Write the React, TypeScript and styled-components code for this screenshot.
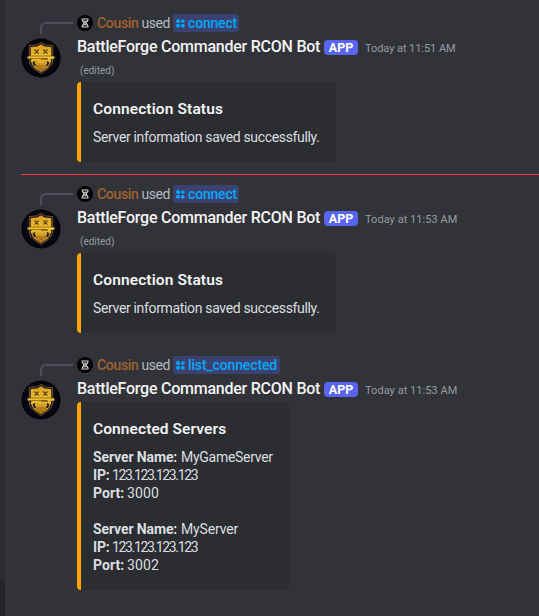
import React from 'react';
import styled, { createGlobalStyle } from 'styled-components';

const GlobalStyle = createGlobalStyle`
  * { box-sizing: border-box; }
  body { margin: 0; background: #313338; overflow: hidden; }
`;

const Screen = styled.div`
  display: flex;
  width: 539px;
  height: 616px;
  background: #323338;
  color: #dbdee1;
  font: 400 14px/18px Roboto, "Noto Sans", sans-serif;
  white-space: nowrap;
`;

const Sidebar = styled.aside`
  display: flex;
  flex: 0 0 5px;
  flex-direction: column;
  justify-content: flex-end;
  background: #2b2d31;
`;

const UserPanel = styled.div`
  height: 37px;
  background: #232428;
`;

const Chat = styled.main`
  flex: 1;
  min-width: 0;
  padding: 14px 0 0 16px;
`;

const Message = styled.article<{ $gap: number }>`
  display: grid;
  grid-template-columns: 40px 1fr;
  column-gap: 16px;
  margin-bottom: ${(p) => p.$gap}px;
`;

const AvatarColumn = styled.div`
  display: flex;
  flex-direction: column;
`;

const ReplySpine = styled.div`
  width: 33px;
  height: 12px;
  margin: 8px 0 4px 19px;
  border: solid #4e5058;
  border-width: 2px 0 0 2px;
  border-top-left-radius: 6px;
`;

const Avatar = styled.svg`
  display: block;
  width: 40px;
  height: 40px;
`;

const Body = styled.div`
  min-width: 0;
`;

const Text = styled.span<{ $track?: number }>`
  letter-spacing: ${(p) => p.$track ?? 0}px;
`;

const ReplyRow = styled.div`
  display: flex;
  align-items: center;
  height: 18px;
  color: #b5bac1;
`;

const MiniAvatar = styled.svg`
  width: 16px;
  height: 16px;
  margin-right: 4px;
`;

const UserName = styled(Text)`
  width: 44.5px;
  color: #a0622f;
  font-weight: 500;
`;

const Used = styled(Text)`
  width: 31.5px;
`;

const Command = styled.span<{ $width: number }>`
  display: flex;
  align-items: center;
  gap: 3px;
  width: ${(p) => p.$width}px;
  height: 18px;
  padding-left: 3px;
  border-radius: 3px;
  background: #3c4270;
  color: #00a8fc;
  font-weight: 500;
`;

const CommandIcon = styled.svg`
  flex: none;
  width: 9px;
  height: 9px;
`;

const Header = styled.header`
  display: flex;
  align-items: center;
  height: 22px;
  margin-top: 4px;
`;

const BotName = styled(Text)`
  width: 247px;
  color: #f2f3f5;
  font-size: 16px;
  font-weight: 500;
`;

const AppBadge = styled.span`
  display: flex;
  align-items: center;
  justify-content: center;
  width: 34px;
  height: 15px;
  margin: 1px 7px 0 0;
  border-radius: 4px;
  background: #5865f2;
  color: #fff;
  font-size: 12.5px;
  font-weight: 700;
  line-height: 15px;
`;

const Timestamp = styled(Text)`
  padding-top: 3px;
  color: #949ba4;
  font-size: 11px;
  font-weight: 400;
`;

const Edited = styled(Text)`
  display: block;
  height: 24px;
  padding-left: 3px;
  color: #949ba4;
  font-size: 10px;
  line-height: 26px;
`;

const Embed = styled.section<{ $width: number; $offset?: number }>`
  width: ${(p) => p.$width}px;
  margin-top: ${(p) => p.$offset ?? 0}px;
  padding: 16px 12px;
  border-left: 4px solid #ffa500;
  border-radius: 4px;
  background: #2b2d31;
`;

const EmbedTitle = styled.h2<{ $track: number }>`
  margin: 0 0 10px;
  color: #f2f3f5;
  font-size: 15.5px;
  font-weight: 600;
  line-height: 23px;
  height: 20px;
  letter-spacing: ${(p) => p.$track}px;
`;

const Line = styled.div`
  display: flex;
  height: 18px;
  line-height: 19px;
`;

const Label = styled(Text)<{ $width: number }>`
  width: ${(p) => p.$width}px;
  font-weight: 700;
`;

const ServerBlock = styled.div`
  & + & { margin-top: 18px; }
`;

const Unread = styled.div`
  height: 1px;
  margin: 12px 0 10px;
  background: #f23f43;
`;

function ShieldAvatar() {
  return (
    <Avatar viewBox="0 0 40 40">
      <defs>
        <radialGradient id="night">
          <stop offset="0" stopColor="#151448" />
          <stop offset=".65" stopColor="#08091f" />
          <stop offset="1" stopColor="#020205" />
        </radialGradient>
        <linearGradient id="gold" x2="0" y2="1">
          <stop offset="0" stopColor="#d99c22" />
          <stop offset=".5" stopColor="#efc431" />
          <stop offset="1" stopColor="#a86c17" />
        </linearGradient>
      </defs>
      <circle cx="20" cy="20" r="19.6" fill="url(#night)" />
      <path d="M8.300 7.500 15.500 7 20 4.500 24.500 7l7.200.5V22c0 6-5 9-11.700 13.500C13.300 31 8.300 28 8.300 22Z" fill="#11101f" stroke="#8f6725" strokeWidth=".8" />
      <path d="M9.700 9 16.300 8.600 20 6.200 23.700 8.600l6.600.4V18.200l3.200.2v2L29.500 21l1 1.800-2.200 4.700-2.300 3L20 34.300 14 30.500l-2.300-3-2.200-4.700 1-1.800-4-.6v-2l3.200-.2Z" fill="url(#gold)" />
      <path d="m13.500 11.500 4.200 4.200m0-4.200-4.200 4.200m8.800-4.200 4.200 4.200m0-4.200-4.200 4.200" stroke="#5c4012" strokeWidth="1.100" />
      <path d="M9.700 18h20.600M6.500 20.500h20" stroke="#7d5517" strokeWidth=".7" />
      <path d="M20 20.700h7v.8h-7Z" fill="#4a3212" />
      <path d="m11.500 24.500 2.700-1.700-.3 2.800 1.600 2-2.500.4Zm17 0-2.700-1.700.3 2.800-1.600 2 2.500.4Z" fill="#2b2020" />
      <path d="M14.500 30.500 16.500 28h7l2 2.500M16.500 31.800 20 30l3.500 1.800" fill="none" stroke="#80591a" strokeWidth=".8" />
      <path d="m16 23.500 1.500 2.500h5l1.500-2.500" fill="none" stroke="#c79422" strokeWidth=".8" />
    </Avatar>
  );
}

function CousinAvatar() {
  return (
    <MiniAvatar viewBox="0 0 16 16">
      <circle cx="8" cy="8" r="8" fill="#020203" />
      <g fill="none" stroke="#d8d8d8">
        <path d="M4.500 4H11.500M4.500 12H11.500" strokeWidth="1.100" />
        <path d="M5 4.500 7 8l-2 3.500M11.300 4.500 9 8l2.300 3.500" strokeWidth="1.300" />
        <path d="M6.500 6.300h3M6.500 9.700h3M8 5.500v5" strokeWidth=".8" />
      </g>
    </MiniAvatar>
  );
}

function SlashCommand({ name, width, track }: { name: string; width: number; track: number }) {
  return (
    <Command $width={width}>
      <CommandIcon viewBox="0 0 9 9" fill="#00a8fc">
        <path d="M0 2a1.900 1.900 0 0 1 1.900-1.900A1.900 1.900 0 0 1 3.900 2v1.900H2A1.900 1.900 0 0 1 0 2Z" />
        <rect x="5" y=".5" width="3.600" height="3.200" rx="1.400" />
        <rect x=".2" y="5" width="3.600" height="3.600" rx="1.400" />
        <rect x="5" y="5" width="3.600" height="3.600" rx="1.400" />
      </CommandIcon>
      <Text $track={track}>{name}</Text>
    </Command>
  );
}

interface BotMessageProps {
  command: React.ReactNode;
  time: string;
  timeTrack: number;
  edited?: boolean;
  gap?: number;
  children: React.ReactNode;
}

function BotMessage({ command, time, timeTrack, edited, gap = 0, children }: BotMessageProps) {
  return (
    <Message $gap={gap}>
      <AvatarColumn>
        <ReplySpine />
        <ShieldAvatar />
      </AvatarColumn>
      <Body>
        <ReplyRow>
          <CousinAvatar />
          <UserName $track={-0.33}>Cousin</UserName>
          <Used $track={-0.45}>used</Used>
          {command}
        </ReplyRow>
        <Header>
          <BotName $track={-0.24}>BattleForge Commander RCON Bot</BotName>
          <AppBadge>APP</AppBadge>
          <Timestamp $track={timeTrack}>{time}</Timestamp>
        </Header>
        {edited && <Edited $track={0}>(edited)</Edited>}
        {children}
      </Body>
    </Message>
  );
}

function StatusEmbed() {
  return (
    <Embed $width={259}>
      <EmbedTitle $track={0.12}>Connection Status</EmbedTitle>
      <Line><Text $track={-0.34}>Server information saved successfully.</Text></Line>
    </Embed>
  );
}

function Server({ name, track, port }: { name: string; track: number; port: string }) {
  return (
    <ServerBlock>
      <Line><Label $width={88} $track={-0.12}>Server Name:</Label><Text $track={track}>{name}</Text></Line>
      <Line><Label $width={19} $track={-0.2}>IP:</Label><Text $track={-1.35}>123.123.123.123</Text></Line>
      <Line><Label $width={34} $track={0.05}>Port:</Label><Text $track={0.1}>{port}</Text></Line>
    </ServerBlock>
  );
}

export default function App() {
  const connect = <SlashCommand name="connect" width={66} track={-0.18} />;
  return (
    <>
      <GlobalStyle />
      <Screen>
        <Sidebar><UserPanel /></Sidebar>
        <Chat>
          <BotMessage command={connect} time="Today at 11:51 AM" timeTrack={-0.06} edited>
            <StatusEmbed />
          </BotMessage>
          <Unread />
          <BotMessage command={connect} time="Today at 11:53 AM" timeTrack={0.05} edited gap={23}>
            <StatusEmbed />
          </BotMessage>
          <BotMessage
            command={<SlashCommand name="list_connected" width={107} track={-0.14} />}
            time="Today at 11:53 AM"
            timeTrack={0.05}
          >
            <Embed $width={212} $offset={2}>
              <EmbedTitle $track={0.08}>Connected Servers</EmbedTitle>
              <Server name="MyGameServer" track={-0.28} port="3000" />
              <Server name="MyServer" track={-0.15} port="3002" />
            </Embed>
          </BotMessage>
        </Chat>
      </Screen>
    </>
  );
}
